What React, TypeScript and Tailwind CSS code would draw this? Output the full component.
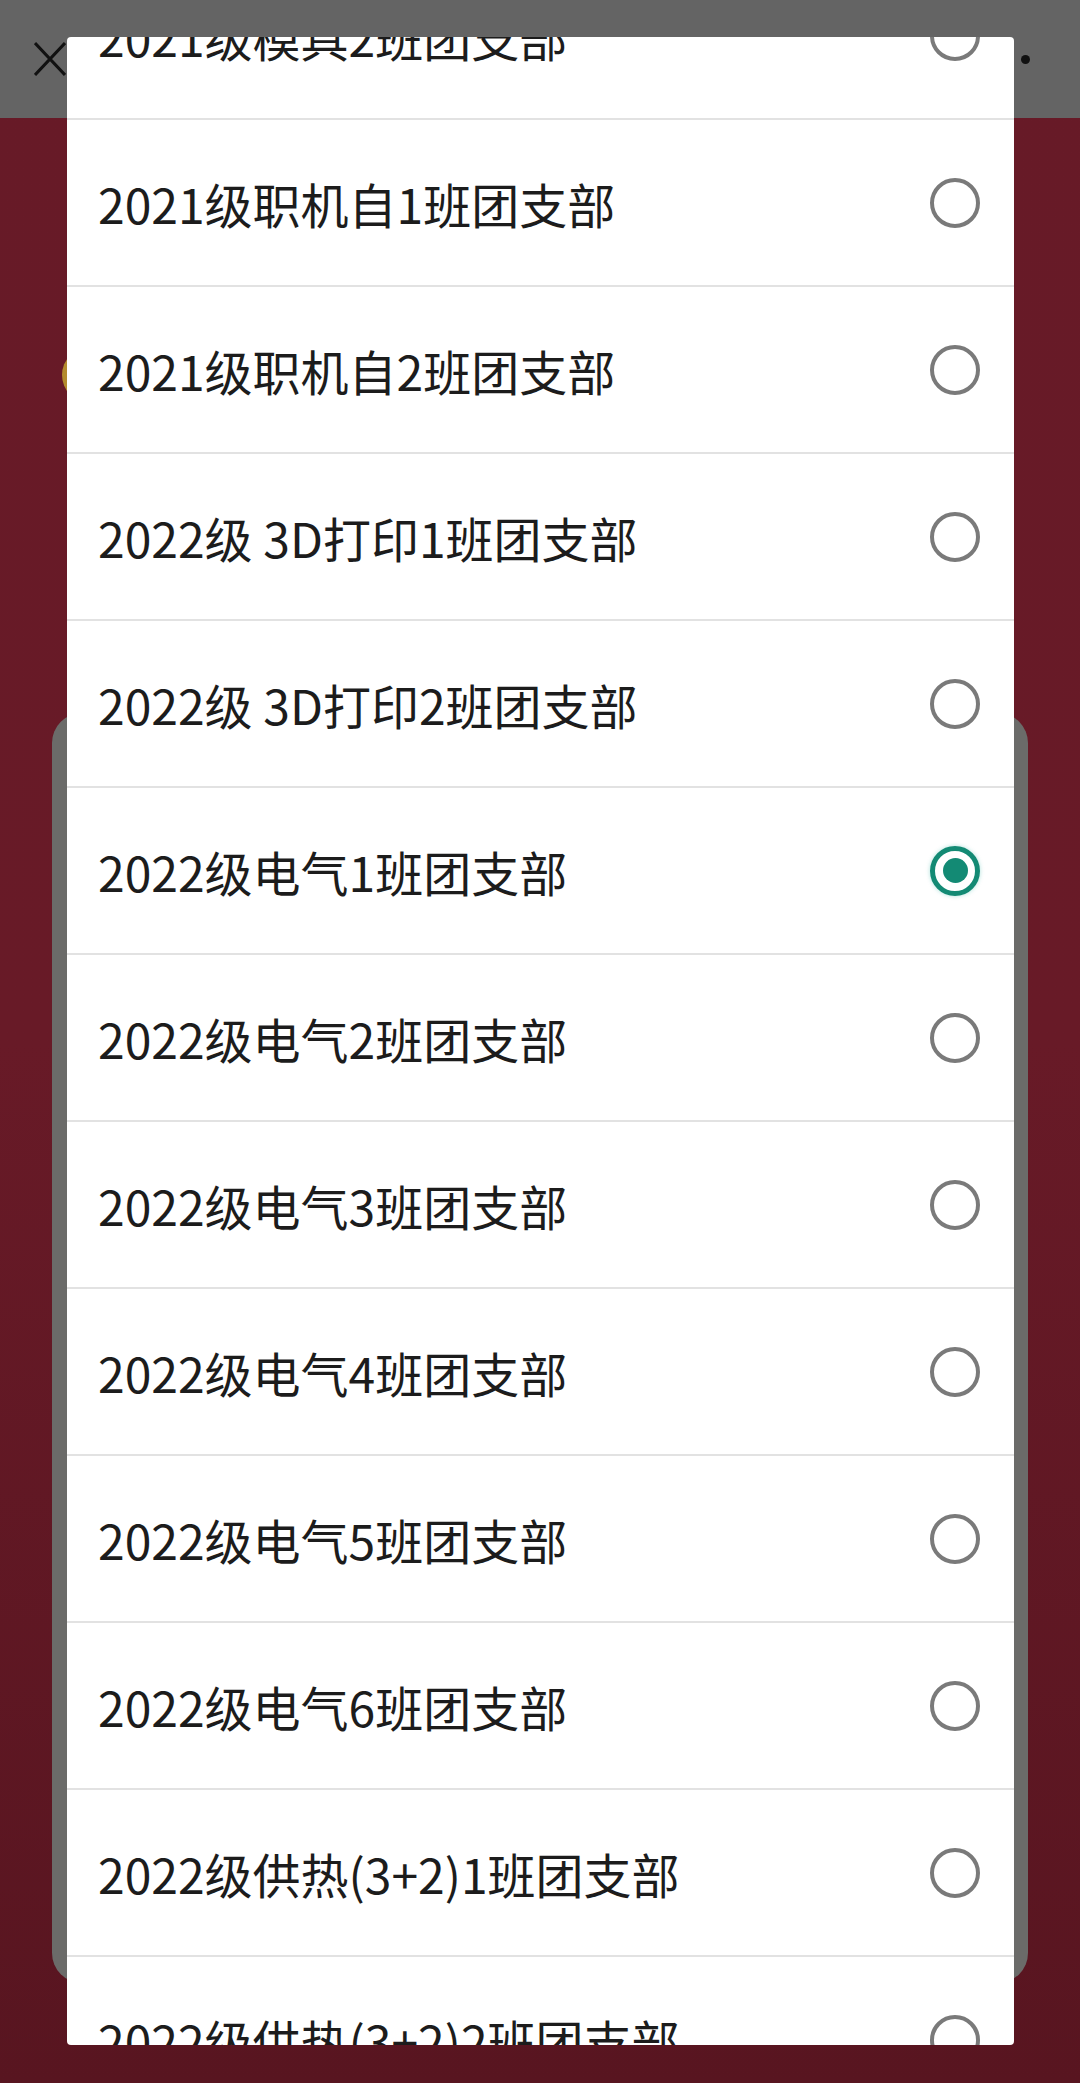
import React from "react";

// list of league branches shown in the picker dialog
const branches = [
  "2021级模具2班团支部",
  "2021级职机自1班团支部",
  "2021级职机自2班团支部",
  "2022级 3D打印1班团支部",
  "2022级 3D打印2班团支部",
  "2022级电气1班团支部",
  "2022级电气2班团支部",
  "2022级电气3班团支部",
  "2022级电气4班团支部",
  "2022级电气5班团支部",
  "2022级电气6班团支部",
  "2022级供热(3+2)1班团支部",
  "2022级供热(3+2)2班团支部"
];

const selected = "2022级电气1班团支部";

function Radio({ checked }: { checked: boolean }) {
  if (checked) {
    return (
      <span className="flex h-[50px] w-[50px] shrink-0 items-center justify-center rounded-full border-[5px] border-[#138a74] shadow-[0_0_4px_rgba(19,170,150,0.35)]">
        <span className="h-[25px] w-[25px] rounded-full bg-[#138a74]" />
      </span>
    );
  }
  return <span className="h-[50px] w-[50px] shrink-0 rounded-full border-[4px] border-[#7a7a7a]" />;
}

function BranchRow({ name }: { name: string }) {
  return (
    <div className="flex h-[167px] items-center justify-between border-b-2 border-[#e2e2e2] pl-[31px] pr-[34px]">
      <span className="text-[48px] leading-none text-[#1c1c1c]">{name}</span>
      <Radio checked={name === selected} />
    </div>
  );
}

export default function App() {
  return (
    <div
      className="relative h-[2083px] w-[1080px] overflow-hidden bg-gradient-to-b from-[#671a27] via-[#681a27] to-[#581520]"
      style={{ fontFamily: '"Noto Sans CJK SC", "Noto Sans", sans-serif' }}
    >
      {/* dimmed page behind the dialog */}
      <div className="flex h-[118px] items-center justify-between bg-[#646464] pl-[34px] pr-[50px]">
        <svg width="32" height="34" viewBox="0 0 32 34" fill="none" stroke="#111" strokeWidth="3">
          <path d="M1 1 L31 33 M31 1 L1 33" />
        </svg>
        <span className="h-[9px] w-[9px] rounded-full bg-[#111]" />
      </div>
      <div className="relative">
        <span className="absolute left-[62px] top-[229px] h-[56px] w-[56px] rounded-full bg-[#b38a2e]" />
      </div>
      <div className="mx-[52px] mt-[595px] h-[1270px] rounded-[30px] bg-[#6b6b69]" />

      {/* picker dialog */}
      <div className="absolute left-[67px] top-[37px] h-[2008px] w-[947px] overflow-hidden rounded-[4px] bg-white">
        <div className="-mt-[84px]">
          {branches.map((b) => (
            <BranchRow key={b} name={b} />
          ))}
        </div>
      </div>
    </div>
  );
}
